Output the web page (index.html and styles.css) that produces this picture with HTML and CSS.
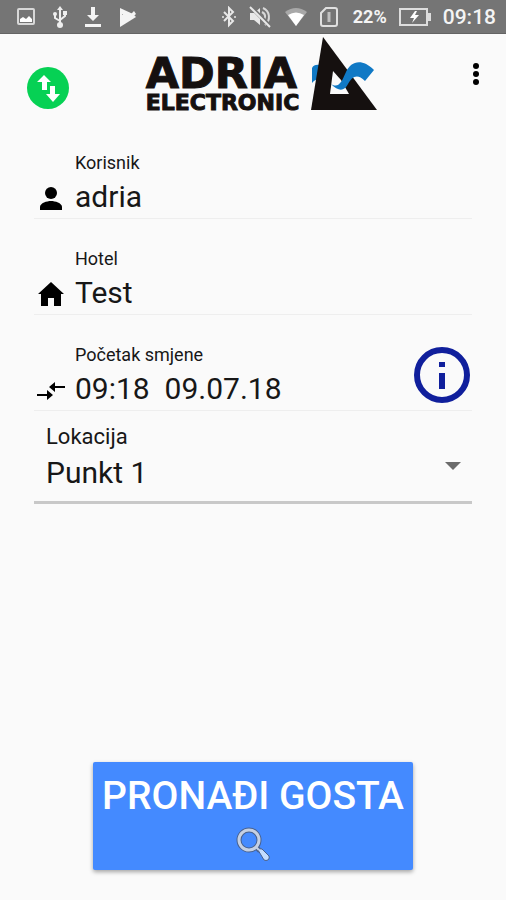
FILE: index.html
```html
<!DOCTYPE html>
<html lang="hr">
<head>
    <meta charset="UTF-8">
    <meta name="viewport" content="width=device-width, initial-scale=1.0">
    <title>Adria Electronic</title>
    <link rel="stylesheet" href="styles.css">
</head>
<body>
    <div class="status-bar">
        <div class="status-left">
            <svg width="20" height="20" viewBox="0 0 20 20"><rect x="2" y="2" width="16" height="15" rx="1" fill="none" stroke="#d8d8d8" stroke-width="2"/><path d="M4 15v-3l3-2 3 2 3-3 3 3v3z" fill="#fff"/></svg>
            <svg width="16" height="24" viewBox="0 0 16 24"><path d="M8 4v16M8 16l-5-3V8M8 15l5-4V7" fill="none" stroke="#eee" stroke-width="2"/><path d="M8 1l3 4H5z" fill="#eee"/><circle cx="8" cy="20" r="3" fill="#eee"/><circle cx="3" cy="9" r="2" fill="#eee"/><path d="M11 6h4v4h-4z" fill="#eee"/></svg>
            <svg width="18" height="24" viewBox="0 0 18 24"><path d="M7 2h4v8h4l-6 6-6-6h4zM1 19h16v3H1z" fill="#f4f4f4"/></svg>
            <svg width="20" height="22" viewBox="0 0 20 22"><path d="M2 2l13 6 3 3L2 21z" fill="#f4f4f4"/><path d="M4 8l5 5 9-8" fill="none" stroke="#757575" stroke-width="1"/><path d="M6 7l4 4 6-6 2 3-8 7-6-6z" fill="#f4f4f4"/></svg>
        </div>
        <div class="status-right">
            <svg width="14" height="22" viewBox="0 0 14 22"><path d="M2 6l9 9-4 4V2l4 4-9 9" fill="none" stroke="#e8e8e8" stroke-width="2"/><circle cx="1" cy="11" r="1" fill="#e8e8e8"/><circle cx="13" cy="11" r="1" fill="#e8e8e8"/></svg>
            <svg width="24" height="24" viewBox="0 0 24 24"><path d="M2 8h4l6-5v17l-6-5H2z" fill="#e8e8e8"/><path d="M14 7c4 2 4 6 1 9M15 3c7 3 8 12 2 17" fill="none" stroke="#d8d8d8" stroke-width="2"/><path d="M3 2l20 20" stroke="#757575" stroke-width="4"/><path d="M2 2l20 20" stroke="#e8e8e8" stroke-width="2"/></svg>
            <svg width="24" height="20" viewBox="0 0 24 20"><path d="M1 5Q12-3 23 5L12 19z" fill="#a8a8a8"/><path d="M4 8q8-5 16 0l-8 11z" fill="#fff"/></svg>
            <svg width="18" height="20" viewBox="0 0 18 20"><path d="M6 1h9q2 0 2 2v14q0 2-2 2H3q-2 0-2-2V6z" fill="none" stroke="#e0e0e0" stroke-width="2"/><path d="M9 5v10" stroke="#c0c0c0" stroke-width="3"/></svg>
            <span class="battery-level">22%</span>
            <svg width="32" height="20" viewBox="0 0 32 20"><path d="M1 2h27v16H1z" fill="none" stroke="#ddd" stroke-width="2"/><path d="M29 6h3v8h-3z" fill="#ddd"/><path d="M16 4l-5 7h4l-2 5 7-8h-4l2-4z" fill="#fff"/></svg>
            <span class="clock">09:18</span>
        </div>
    </div>

    <header class="app-header">
        <button type="button" class="icon-button" aria-label="Sinkronizacija">
            <svg width="42" height="42" viewBox="0 0 42 42"><circle cx="21" cy="21" r="21" fill="#06d154"/><path d="M17 8l7 7h-4v8h-5v-8h-5zM23 19h5v8h5l-7 8-7-8h4z" fill="#fff"/></svg>
        </button>
        <div class="logo">
            <div class="logo-text">
                <span class="logo-name">ADRIA</span>
                <span class="logo-sub">ELECTRONIC</span>
            </div>
            <svg width="68" height="76" viewBox="0 0 68 76">
                <path d="M1 47V32q2-4 8-3v14q-5 0-8 4z" fill="#1079c5"/>
                <path d="M12 1L66 74H0z" fill="#15100f"/>
                <path d="M22 35l8 9 8 14H19z" fill="#fafafa"/>
                <path d="M20 48c8 5 11-3 15-12 5-11 16-14 28-2l-9 11c-8-8-13-4-17 3-4 8-10 7-17 0z" fill="#1079c5"/>
            </svg>
        </div>
        <button type="button" class="icon-button menu-button" aria-label="Izbornik">
            <svg width="8" height="24" viewBox="0 0 8 24"><circle cx="4" cy="4" r="3"/><circle cx="4" cy="12" r="3"/><circle cx="4" cy="20" r="3"/></svg>
        </button>
    </header>

    <form class="shift-form">
        <div class="field">
            <label for="korisnik">Korisnik</label>
            <svg class="field-icon" width="34" height="34" viewBox="0 0 34 34"><circle cx="17" cy="11" r="6"/><path d="M6 28v-3c0-4 7-6 11-6s11 2 11 6v3z"/></svg>
            <input type="text" id="korisnik" value="adria" readonly>
        </div>
        <div class="field">
            <label for="hotel">Hotel</label>
            <svg class="field-icon" width="34" height="34" viewBox="0 0 34 34"><path d="M17 4l13 12h-3v12h-7v-8h-6v8H7V16H4z"/></svg>
            <input type="text" id="hotel" value="Test" readonly>
        </div>
        <div class="field">
            <label for="smjena">Početak smjene</label>
            <svg class="field-icon" width="34" height="34" viewBox="0 0 34 34"><path d="M3 20h10v-4l6 5-6 5v-4H3zM31 12H21V8l-6 5 6 5v-4h10z"/></svg>
            <input type="text" id="smjena" value="09:18&nbsp; 09.07.18" readonly>
            <button type="button" class="icon-button info-button" aria-label="Informacije">
                <svg width="56" height="56" viewBox="0 0 56 56"><circle cx="28" cy="28" r="25" fill="none" stroke="#101f9c" stroke-width="6"/><path d="M25 15h6v5h-6zM25 26h6v16h-6z" fill="#101f9c"/></svg>
            </button>
        </div>
        <div class="location">
            <label for="lokacija">Lokacija</label>
            <div class="select-row">
                <select id="lokacija">
                    <option>Punkt 1</option>
                </select>
                <svg width="16" height="8" viewBox="0 0 16 8"><path d="M0 0h16L8 8z" fill="#6b6b6b"/></svg>
            </div>
        </div>

        <button type="submit" class="find-button">
            <span>PRONAĐI GOSTA</span>
            <svg width="36" height="36" viewBox="0 0 36 36"><circle cx="14" cy="14" r="10" fill="none" stroke="#48618e" stroke-width="5"/><path d="M21 21l4 4" stroke="#48618e" stroke-width="5"/><path d="M23 24q1-2 4-1l7 7q1 2-1 4-2 1-4 0z" fill="#c4dcff" stroke="#48618e"/><circle cx="14" cy="14" r="10" fill="none" stroke="#c4d0e4" stroke-width="3"/><path d="M21 21l3 3" stroke="#c4d0e4" stroke-width="2"/></svg>
        </button>
    </form>
</body>
</html>
```
FILE: styles.css
```css
* {
    box-sizing: border-box;
}

body {
    font-family: Roboto, "Liberation Sans", sans-serif;
    background-color: #fafafa;
    color: #171717;
    margin: 0;
    display: flex;
    flex-direction: column;
    min-height: 100vh;
}

svg {
    display: block;
    flex-shrink: 0;
}

.status-bar {
    display: flex;
    justify-content: space-between;
    height: 34px;
    padding: 0 10px 0 16px;
    background-color: #757575;
    border-bottom: 1px solid #646464;
    color: #f4f4f4;
}

.status-left,
.status-right {
    display: flex;
    align-items: center;
}

.status-left {
    gap: 16px;
}

.status-right {
    gap: 12px;
}

.battery-level {
    font-size: 18px;
    font-weight: 700;
    margin-left: 3px;
}

.clock {
    font-size: 21px;
    font-weight: 500;
}

.app-header {
    display: flex;
    justify-content: space-between;
    align-items: flex-start;
    padding: 2px 26px 0 27px;
    height: 89px;
}

.icon-button {
    padding: 0;
    border: none;
    background: none;
    cursor: pointer;
}

.app-header .icon-button {
    margin-top: 31px;
}

.app-header .menu-button {
    margin-top: 26px;
}

.logo {
    display: flex;
    gap: 12px;
    margin-right: 16px;
}

.logo-text {
    display: flex;
    flex-direction: column;
    padding-top: 19px;
    font-family: "DejaVu Sans", Verdana, sans-serif;
    font-weight: 700;
    color: #15100f;
    -webkit-text-stroke: 1px #15100f;
}

.logo-name {
    font-size: 43px;
    line-height: 36px;
}

.logo-sub {
    font-size: 22px;
    line-height: 24px;
}

.shift-form {
    flex: 1;
    display: flex;
    flex-direction: column;
    padding: 0 34px 30px;
}

.field {
    display: grid;
    grid-template-columns: 34px 1fr auto;
    grid-template-rows: 24px 43px;
    column-gap: 7px;
    padding-top: 28px;
    border-bottom: 1px solid #eeeeee;
    height: 96px;
}

.field label {
    grid-column: 2;
    font-size: 18px;
    line-height: 24px;
}

.field-icon {
    grid-row: 2;
    grid-column: 1;
    margin-top: 7px;
}

.field input {
    grid-row: 2;
    grid-column: 2;
    width: 100%;
    min-width: 0;
    padding: 0 0 1px;
    border: none;
    outline: none;
    background: none;
    color: inherit;
    font-family: inherit;
    font-size: 30px;
}

.info-button {
    grid-row: 1 / 3;
    grid-column: 3;
    align-self: start;
    margin: 4px 2px 0 0;
}

.location {
    padding: 12px 11px 8px 12px;
    border-bottom: 3px solid #c8c8c8;
}

.location label {
    display: block;
    font-size: 22px;
    line-height: 28px;
}

.select-row {
    display: flex;
    align-items: center;
}

.select-row select {
    flex: 1;
    height: 42px;
    padding: 0;
    border: none;
    outline: none;
    background: none;
    appearance: none;
    color: inherit;
    font-family: inherit;
    font-size: 30px;
}

.select-row svg {
    margin-bottom: 12px;
    pointer-events: none;
}

.find-button {
    display: flex;
    flex-direction: column;
    align-items: center;
    align-self: center;
    margin-top: auto;
    padding: 8px 9px;
    border: none;
    border-radius: 2px;
    background-color: #448aff;
    box-shadow: 0 2px 4px rgba(0, 0, 0, 0.35);
    color: white;
    font-family: inherit;
    font-size: 39px;
    font-weight: 500;
    line-height: 52px;
    cursor: pointer;
}

.find-button svg {
    margin-top: 4px;
}
```
